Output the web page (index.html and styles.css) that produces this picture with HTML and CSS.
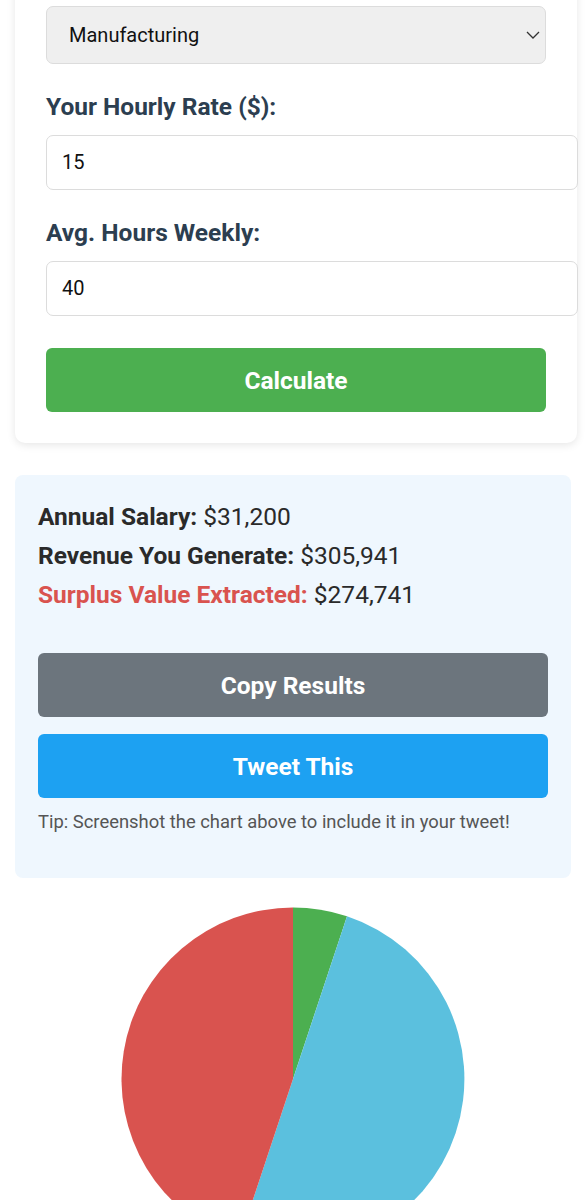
FILE: index.html
```html
<!DOCTYPE html>
<html lang="en">
<head>
<meta charset="utf-8">
<title>Surplus Value Calculator</title>
<link rel="stylesheet" href="styles.css">
</head>
<body>
<div class="page">
  <section class="card">
    <div class="select-wrap">
      <select class="select">
        <option>Manufacturing</option>
      </select>
      <svg class="chev" width="14" height="8" viewBox="0 0 14 8"><path d="M1 1 L7 7 L13 1" fill="none" stroke="#333" stroke-width="1.3"/></svg>
    </div>
    <label class="label">Your Hourly Rate ($):</label>
    <input class="input" type="text" value="15">
    <label class="label">Avg. Hours Weekly:</label>
    <input class="input" type="text" value="40">
    <button class="btn btn-green">Calculate</button>
  </section>

  <section class="results">
    <p class="line"><strong>Annual Salary:</strong> $31,200</p>
    <p class="line"><strong>Revenue You Generate:</strong> $305,941</p>
    <p class="line"><strong class="red">Surplus Value Extracted:</strong> $274,741</p>
    <button class="btn btn-gray">Copy Results</button>
    <button class="btn btn-blue">Tweet This</button>
    <p class="tip">Tip: Screenshot the chart above to include it in your tweet!</p>
  </section>

  <div class="chart">
    <svg width="344" height="344" viewBox="-172 -172 344 344">
      <path d="M0 0 L0 -171.5 A171.5 171.5 0 0 1 54.02 -162.77 Z" fill="#4caf50"/>
      <path d="M0 0 L54.02 -162.77 A171.5 171.5 0 0 1 -54.02 162.77 Z" fill="#5bc0de"/>
      <path d="M0 0 L-54.02 162.77 A171.5 171.5 0 0 1 0 -171.5 Z" fill="#d9534f"/>
    </svg>
  </div>
</div>
</body>
</html>
```

FILE: styles.css
```css
html, body {
  margin: 0;
  padding: 0;
}
body {
  background: #fff;
  font-family: Roboto, "Liberation Sans", Arial, sans-serif;
  color: #333;
}
.page {
  padding: 0 10px 0 15px;
}
.card {
  background: #fff;
  border-radius: 10px;
  box-shadow: 0 2px 8px rgba(0,0,0,0.10);
  margin-top: -40px;
  padding: 46px 31px 31px;
}
.select-wrap {
  position: relative;
}
.select {
  display: block;
  width: 100%;
  height: 58px;
  box-sizing: border-box;
  appearance: none;
  -webkit-appearance: none;
  background: #efefef;
  border: 1px solid #dcdcdc;
  border-radius: 7px;
  padding: 0 22px;
  font-family: inherit;
  font-size: 20px;
  color: #111;
  margin: 0;
}
.chev {
  position: absolute;
  right: 6px;
  top: 25px;
}
.label {
  display: block;
  font-size: 24.5px;
  line-height: 28px;
  font-weight: 700;
  color: #2c3e50;
  margin: 29px 0 14px;
}
.input {
  display: block;
  width: 100%;
  padding: 15px;
  margin: 0;
  border: 1px solid #dcdcdc;
  border-radius: 7px;
  font-family: inherit;
  font-size: 20px;
  line-height: 23px;
  color: #111;
  background: #fff;
}
.btn {
  display: block;
  width: 100%;
  height: 64px;
  border: 0;
  border-radius: 6px;
  color: #fff;
  font-family: inherit;
  font-size: 24.5px;
  font-weight: 700;
  padding: 0;
}
.btn-green {
  background: #4caf50;
  margin-top: 32px;
}
.results {
  background: #eff7fe;
  border-radius: 8px;
  margin: 32px 6px 0 0;
  padding: 28px 23px 46px;
}
.line {
  margin: 0;
  font-size: 24.5px;
  line-height: 28px;
  color: #2a2a2a;
}
.line + .line {
  margin-top: 11px;
}
.line strong {
  color: #2a2a2a;
}
.line strong.red {
  color: #d9534f;
}
.btn-gray {
  background: #6c757d;
  margin-top: 44px;
}
.btn-blue {
  background: #1da1f2;
  margin-top: 17px;
}
.tip {
  margin: 13px 0 0;
  font-size: 18.4px;
  line-height: 21px;
  color: #555;
}
.chart {
  display: flex;
  justify-content: center;
  margin: 29px 6px 0 0;
}
.chart svg {
  display: block;
}
```
